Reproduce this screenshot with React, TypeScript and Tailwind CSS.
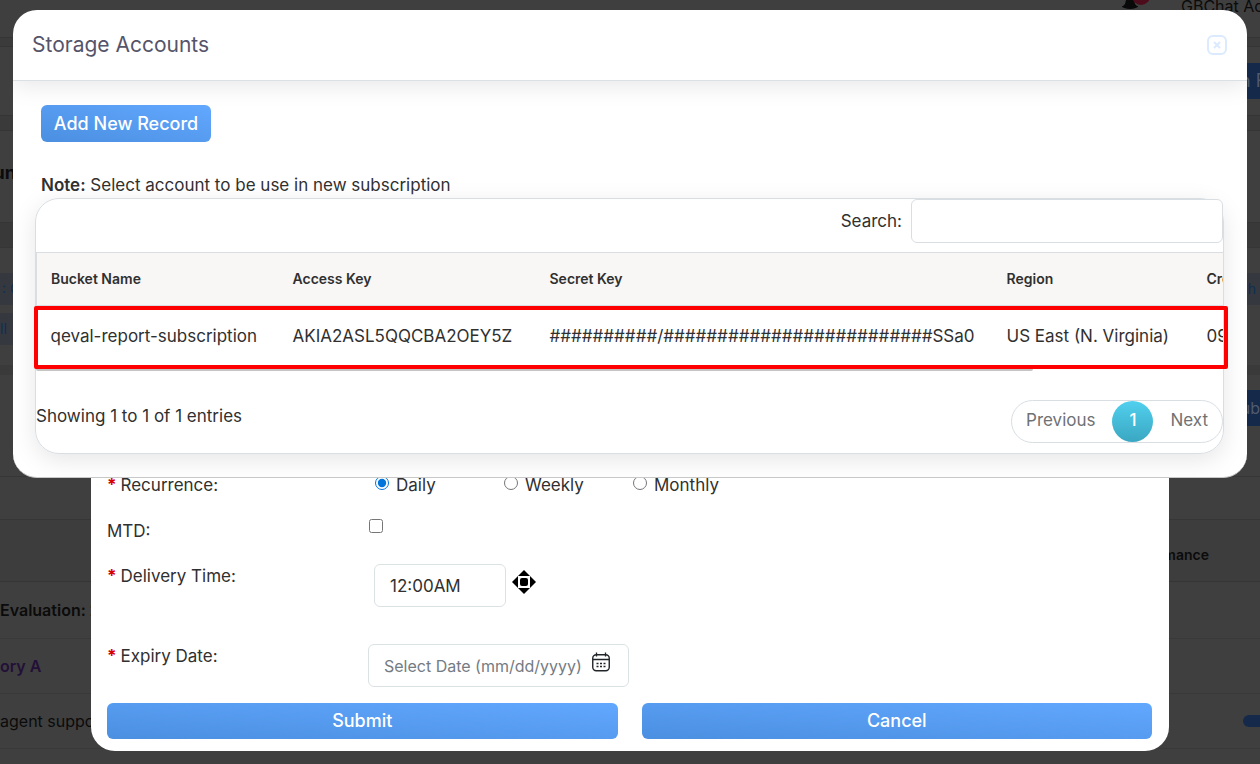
import { useState } from 'react';
import type { ReactNode } from 'react';

interface StorageAccount {
  bucket: string;
  accessKey: string;
  secretKey: string;
  region: string;
  created: string;
}

const accounts: StorageAccount[] = [
  {
    bucket: 'qeval-report-subscription',
    accessKey: 'AKIA2ASL5QQCBA2OEY5Z',
    secretKey: '##########/#########################SSa0',
    region: 'US East (N. Virginia)',
    created: '09/12/2023',
  },
];

const columns = [
  { title: 'Bucket Name', width: 'w-[242px]' },
  { title: 'Access Key', width: 'w-[257px]' },
  { title: 'Secret Key', width: 'w-[457px]' },
  { title: 'Region', width: 'w-[200px]' },
  { title: 'Created Date', width: 'w-[250px]' },
];

const recurrences = ['Daily', 'Weekly', 'Monthly'];

function BellIcon() {
  return (
    <svg width="28" height="10" viewBox="0 0 28 10" aria-hidden="true">
      <path d="M5 0h8l1 4 3 3H1l3-3z" fill="#090909" />
      <path d="M1 6a8 3 0 0 0 16 0z" fill="#090909" />
      <circle cx="20" cy="-4" r="9" fill="#4d0c1b" />
    </svg>
  );
}

function CloseIcon() {
  return (
    <svg width="20" height="20" viewBox="0 0 20 20" fill="none" stroke="#dbeafe" strokeWidth="2" aria-hidden="true">
      <rect x="1" y="1" width="18" height="18" rx="5" />
      <path d="M7 7l6 6M13 7l-6 6" />
    </svg>
  );
}

function SpinnerIcon() {
  return (
    <svg width="24" height="24" viewBox="0 0 24 24" aria-hidden="true">
      <path d="M12 0l12 12-12 12L0 12z" fill="#000" />
      <rect x="6" y="6" width="12" height="12" fill="#fff" />
      <rect x="8" y="8" width="8" height="8" rx="2" fill="#000" />
    </svg>
  );
}

function CalendarIcon() {
  return (
    <svg width="18" height="20" viewBox="0 0 18 20" fill="none" stroke="#212529" aria-hidden="true">
      <rect x="0.75" y="2.75" width="16.5" height="16" rx="3.5" strokeWidth="1.4" />
      <path d="M1 7.5h16M4.5 0.5v4M13.5 0.5v4" strokeWidth="1.3" />
      <path d="M4.5 11.5h2M8 11.5h2M11.5 11.5h2M4.5 14.5h2M8 14.5h2M11.5 14.5h2" strokeWidth="1.6" />
    </svg>
  );
}

function BackgroundPage() {
  return (
    <main className="flex min-h-screen flex-col bg-[#3f3f3f] text-base text-[#0b0b0b]">
      <header className="flex h-[37px] items-start justify-end">
        <BellIcon />
        <span className="ml-8 w-[79px] overflow-hidden leading-3 whitespace-nowrap">GBChat Ad</span>
      </header>
      <div className="h-[10px] border-y border-[#353535] bg-[#3b3b3b]" />
      <section className="flex h-[68px] items-center justify-end">
        <div className="flex h-9 w-5 items-center overflow-hidden bg-[#15294a] text-lg whitespace-nowrap text-[#4f5b6d]">n F</div>
      </section>
      <div className="h-4 border-y border-[#353535] bg-[#3a3a3a]" />
      <section className="flex h-[91px] w-4 justify-end overflow-hidden pt-7 text-lg font-bold">un</section>
      <div className="h-[26px] border-y border-[#363636] bg-[#393939]" />
      <section className="flex h-[117px] flex-col gap-2 pt-[25px] text-sm text-[#0d2f55]">
        <div className="flex h-8 items-center justify-between bg-[#36383f] pr-1 pl-[2px]">
          <span>: C</span>
          <span>h</span>
        </div>
        <div className="flex h-8 w-[22px] items-center bg-[#36383f]">ll</div>
      </section>
      <div className="h-[10px] bg-[#3a3a3a]" />
      <section className="flex h-[102px] items-start justify-end border-b border-[#363636] pt-[15px]">
        <div className="flex h-9 w-5 items-center justify-end overflow-hidden bg-[#15294a] text-[#4f5b6d]">ub</div>
      </section>
      <div className="h-[43px] border-b border-[#363636]" />
      <div className="flex h-[62px] items-end justify-end border-b border-[#353535] bg-[#3d3d3d] pr-[51px] pb-4 text-sm leading-5 font-semibold">
        mance
      </div>
      <div className="flex h-[57px] items-center border-b border-[#393939] font-semibold">Evaluation: 2</div>
      <div className="flex h-[55px] items-center border-b border-[#393939] font-semibold text-[#231038]">ory A</div>
      <div className="flex h-[55px] items-center justify-between border-b border-[#393939]">
        <span>agent suppo</span>
        <span className="h-3 w-[17px] rounded-l-full bg-[#15294a]" />
      </div>
    </main>
  );
}

interface FieldRowProps {
  label: string;
  htmlFor?: string;
  required?: boolean;
  height: string;
  children: ReactNode;
}

function FieldRow({ label, htmlFor, required, height, children }: FieldRowProps) {
  return (
    <div className={`flex items-start ${height}`}>
      <label htmlFor={htmlFor} className="w-[261px] shrink-0 leading-6">
        {required && <span className="mr-1 font-bold text-[#d60000]">*</span>}
        {label}
      </label>
      {children}
    </div>
  );
}

const blueButton =
  'rounded-md bg-linear-to-tr from-[#4a8fe0] to-[#62a8ff] text-lg font-medium text-white';

function SubscriptionDialog() {
  const [recurrence, setRecurrence] = useState('Daily');

  return (
    <section className="absolute inset-x-[91px] top-[440px] rounded-b-[24px] bg-white pt-[33px] pr-[17px] pb-3 pl-4">
      <FieldRow label="Recurrence:" required height="h-[46px]">
        {recurrences.map((name) => (
          <label key={name} className="ml-[7px] flex w-[122px] items-start leading-6">
            <input
              type="radio"
              name="recurrence"
              className="mt-[3px] mr-[7px] size-[14px] accent-[#0075dc]"
              checked={recurrence === name}
              onChange={() => setRecurrence(name)}
            />
            {name}
          </label>
        ))}
      </FieldRow>
      <FieldRow label="MTD:" htmlFor="mtd" height="h-[45px]">
        <input id="mtd" type="checkbox" className="ml-px size-[14px]" />
      </FieldRow>
      <FieldRow label="Delivery Time:" htmlFor="delivery" required height="h-[80px]">
        <input
          id="delivery"
          type="text"
          defaultValue="12:00AM"
          className="ml-[6px] h-[43px] w-[132px] rounded-md border border-[#dbe2e4] px-[15px]"
        />
        <button type="button" aria-label="Change time" className="mt-[6px] ml-[6px]">
          <SpinnerIcon />
        </button>
      </FieldRow>
      <FieldRow label="Expiry Date:" htmlFor="expiry" required height="h-[59px]">
        <div className="flex h-[43px] w-[261px] items-start rounded-md border border-[#dbe2e4] pl-[15px]">
          <input
            id="expiry"
            type="text"
            placeholder="Select Date (mm/dd/yyyy)"
            className="h-[41px] w-[208px] text-base placeholder:text-[#747b83]"
          />
          <button type="button" aria-label="Open calendar" className="mt-[7px]">
            <CalendarIcon />
          </button>
        </div>
      </FieldRow>
      <div className="grid grid-cols-2 gap-6">
        <button type="submit" className={`h-9 ${blueButton}`}>Submit</button>
        <button type="button" className={`h-9 ${blueButton}`}>Cancel</button>
      </div>
    </section>
  );
}

function AccountsTable() {
  return (
    <div className="relative">
      <div className="overflow-hidden">
        <table className="w-[1406px] table-fixed border-collapse text-left">
          <thead className="border-y border-l border-[#d8dee2] bg-[#f8f7f5] text-sm">
            <tr className="h-[53px]">
              {columns.map((column) => (
                <th key={column.title} className={`px-[14px] font-semibold ${column.width}`}>
                  {column.title}
                </th>
              ))}
            </tr>
          </thead>
          <tbody>
            {accounts.map((account) => (
              <tr key={account.bucket} className="h-[61px] whitespace-nowrap">
                <td className="px-[14px]">{account.bucket}</td>
                <td className="px-[14px]">{account.accessKey}</td>
                <td className="px-[14px]">{account.secretKey}</td>
                <td className="px-[14px]">{account.region}</td>
                <td className="px-[14px]">{account.created}</td>
              </tr>
            ))}
          </tbody>
        </table>
      </div>
      {/* scrollbar thumb */}
      <div className="h-1 w-[84%] rounded-full bg-[#c4c4c4]" />
      {/* highlight around the selected record */}
      <div className="pointer-events-none absolute -right-[5px] bottom-[2px] -left-[2px] h-[63px] rounded-xs border-4 border-[#ff0000]" />
    </div>
  );
}

function StorageAccountsDialog() {
  return (
    <section
      role="dialog"
      aria-labelledby="storage-title"
      className="absolute inset-x-[13px] top-[10px] overflow-hidden rounded-[24px] border-b border-[#c8c8c8] bg-white"
    >
      <header className="flex h-[71px] items-center justify-between border-b border-[#dbe0e5] pr-5 pl-[19px] shadow-[0_4px_24px_rgba(0,0,0,0.1)]">
        <h2 id="storage-title" className="text-[21px] text-[#55546a]">Storage Accounts</h2>
        <button type="button" aria-label="Close">
          <CloseIcon />
        </button>
      </header>
      <div className="pt-6 pr-[23px] pb-[23px] pl-[22px]">
        <button type="button" className={`ml-[6px] h-[37px] w-[170px] ${blueButton}`}>Add New Record</button>
        <p className="mt-[31px] mb-[1px] ml-[6px] leading-6">
          <strong className="font-semibold">Note:</strong> Select account to be use in new subscription
        </p>
        <div className="rounded-[24px] border border-[#d8dee2] shadow-[0_6px_24px_rgba(0,0,0,0.1)]">
          <div className="flex h-[53px] items-start justify-end">
            <label htmlFor="search" className="mr-[9px] leading-[44px]">Search:</label>
            <input id="search" type="text" className="h-11 w-[312px] rounded-md border border-[#d8dee2] bg-white px-3" />
          </div>
          <AccountsTable />
          <div className="flex h-[82px] items-start justify-between pt-[29px]">
            <span className="pt-1 leading-6">Showing 1 to 1 of 1 entries</span>
            <nav className="flex h-[43px] items-center rounded-full border border-[#d8dee2] px-[14px] text-[#6f7275]">
              <button type="button">Previous</button>
              <button
                type="button"
                aria-current="page"
                className="mx-[17px] size-[41px] rounded-full bg-linear-to-b from-[#50d0ee] to-[#3ba7c2] font-medium text-white"
              >
                1
              </button>
              <button type="button">Next</button>
            </nav>
          </div>
        </div>
      </div>
    </section>
  );
}

export default function App() {
  return (
    <div className="relative min-h-screen overflow-hidden font-[Inter,sans-serif] text-[17px] text-[#303030]">
      <BackgroundPage />
      <SubscriptionDialog />
      <StorageAccountsDialog />
    </div>
  );
}
